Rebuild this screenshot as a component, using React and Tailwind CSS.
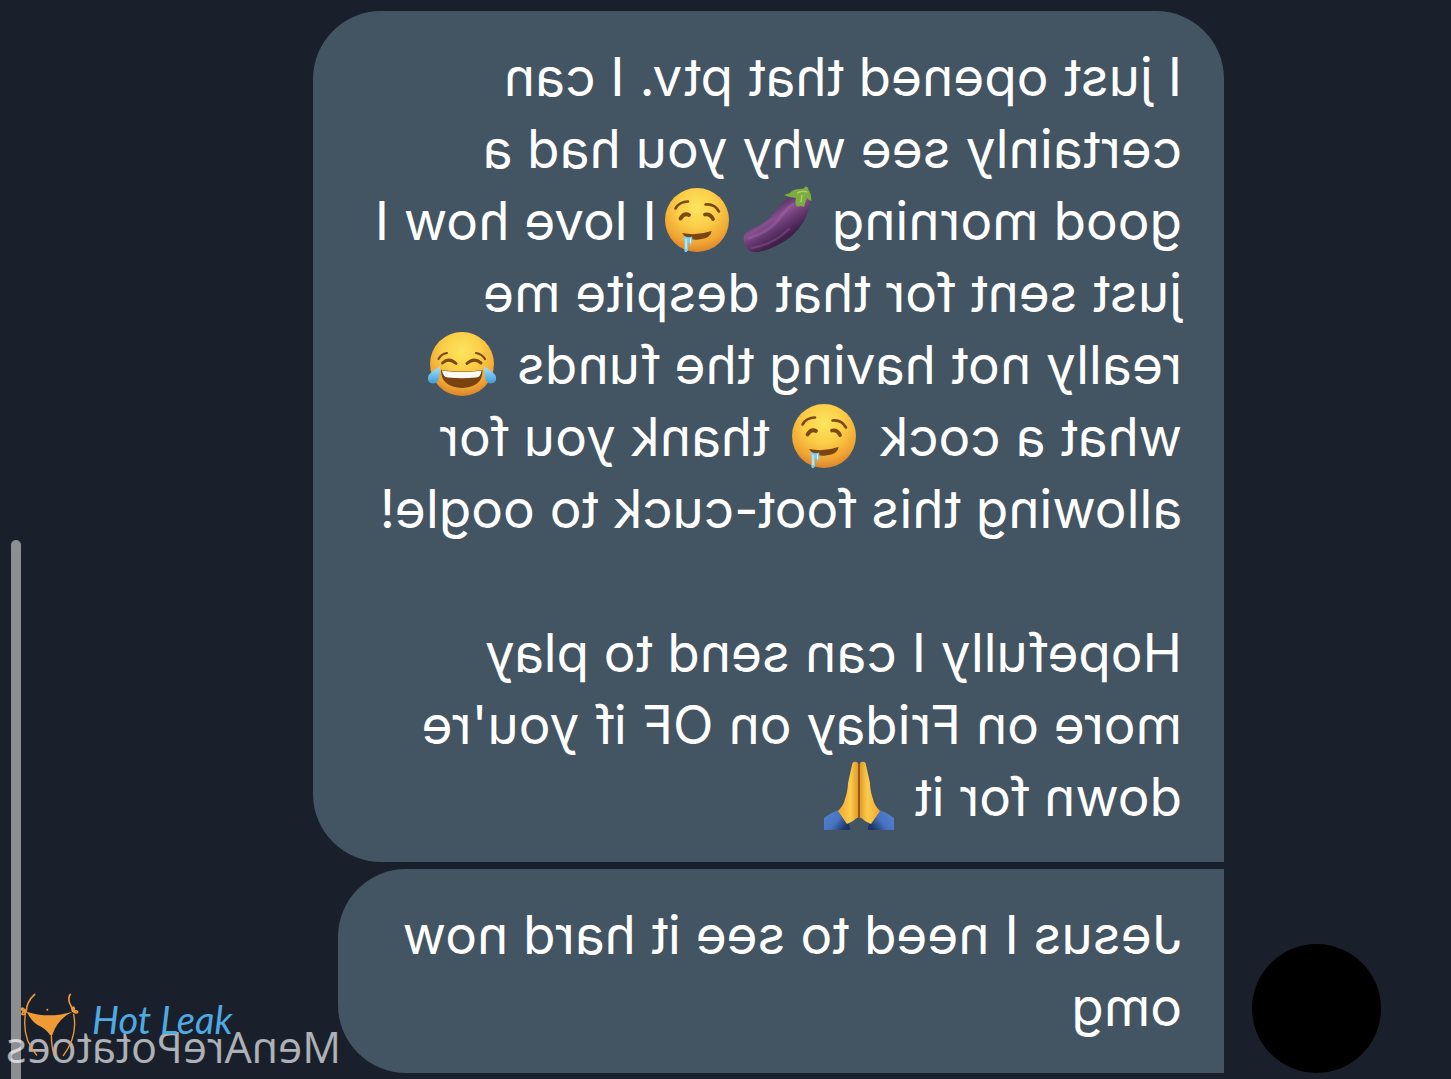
import React from "react";

const emojiClass = "mx-1 inline-block h-[70px] w-[72px] -scale-x-100 align-[-15px]";

function FaceGradient({ id }) {
  return (
    <radialGradient id={id} cx="0.5" cy="0.3" r="0.7">
      <stop offset="0" stopColor="#fde55e" />
      <stop offset="0.45" stopColor="#fbcd47" />
      <stop offset="0.8" stopColor="#f0a634" />
      <stop offset="1" stopColor="#dd842a" />
    </radialGradient>
  );
}

function Drooling({ id }) {
  return (
    <svg className={emojiClass} viewBox="0 0 72 70" role="img" aria-label="drooling face">
      <defs><FaceGradient id={id} /></defs>
      <circle cx="36" cy="35" r="32" fill={`url(#${id})`} />
      <g fill="none" stroke="#7a4a12" strokeLinecap="round">
        <path d="M14.500 23.500Q18.500 16.500 27 16.500" strokeWidth="2.600" />
        <path d="M44.500 19.500Q53.500 18.500 58 26.500" strokeWidth="2.600" />
        <path d="M19.500 33.500Q23 27.500 28 30" strokeWidth="3.800" />
        <path d="M44 29.500Q49.500 28.500 52 34" strokeWidth="3.800" />
      </g>
      <path d="M21 48Q36 51 50.500 46Q50.500 53 38 54.500Q26 56 21 48Z" fill="#7a4512" />
      <path d="M22.500 51Q27 53 31 51.500Q32 54 30.500 60Q29 61.500 28.500 59L28.500 56L27 58L27 65.500Q25 68.500 23.300 66L23.500 58Z" fill="#82cdec" />
      <path d="M25 54L25 64M29.500 53.500L29.500 58" stroke="#e5f8ff" strokeWidth="1" />
    </svg>
  );
}

function Eggplant() {
  return (
    <svg className={emojiClass} viewBox="0 0 72 70" role="img" aria-label="eggplant">
      <defs>
        <linearGradient id="egg" x1="0.3" y1="0.3" x2="0.62" y2="0.75">
          <stop offset="0" stopColor="#56305f" />
          <stop offset="0.35" stopColor="#875090" />
          <stop offset="0.6" stopColor="#693a73" />
          <stop offset="1" stopColor="#40204a" />
        </linearGradient>
      </defs>
      <path d="M3 56Q1 48 11 44Q24 39 33 28Q41 16 50 11Q62 6 68 15Q70 23 63 36Q53 53 35 61Q21 68 12 67Q4 65 3 56Z" fill="url(#egg)" />
      <path d="M8 53Q26 48 37 35Q45 24 52 19" fill="none" stroke="#a66daa" strokeWidth="3" opacity="0.4" strokeLinecap="round" />
      <path d="M11 63Q33 59 48 44" fill="none" stroke="#9a61a0" strokeWidth="2" opacity="0.4" strokeLinecap="round" />
      <path d="M43 10L49 8Q52 4 59 4Q63 4 64.500 1.500Q67.500 1.500 67.500 5Q70 7 70.500 16Q68 16 66 13Q64 18 63 22Q58 20 57 22Q53 20 55 13Q49 13 43 10Z" fill="#7dac40" />
      <path d="M56 8Q62 5 66 7M61 10L60 17" fill="none" stroke="#a9ce62" strokeWidth="1.500" />
    </svg>
  );
}

function Joy() {
  return (
    <svg className={emojiClass} viewBox="0 0 72 70" role="img" aria-label="face with tears of joy">
      <defs>
        <FaceGradient id="joy" />
        <linearGradient id="tear" x1="0" y1="0" x2="0" y2="1">
          <stop offset="0" stopColor="#a9e2fa" />
          <stop offset="1" stopColor="#3f9bdb" />
        </linearGradient>
      </defs>
      <circle cx="36" cy="35" r="32" fill="url(#joy)" />
      <g fill="none" stroke="#7a4a12" strokeLinecap="round">
        <path d="M12.500 30Q15 25 21 24M59 30Q56 25 50 24" strokeWidth="2.200" />
        <path d="M16.500 34Q23 28 30 34.500M41 34.500Q48 28 55 34" strokeWidth="3" />
      </g>
      <path d="M15 41Q36 44 56.500 41Q57 58 36 59Q15 58 15 41Z" fill="#7a4210" />
      <path d="M16 41.500Q36 44.500 55.500 41.500Q55 48 50 48.500Q36 50 22 48.500Q17 48 16 41.500Z" fill="#fbfaf5" />
      <path d="M14 37.500Q14.500 54 7.500 54.500Q1 54 2 48Q3 43.500 14 37.500Z" fill="url(#tear)" />
      <path d="M58 37.500Q57.500 54 64.500 54.500Q71 54 70 48Q69 43.500 58 37.500Z" fill="url(#tear)" />
    </svg>
  );
}

function FoldedHands() {
  const half = (
    <>
      <path d="M16 49Q9 51 1 57L1 69L27 69Q28 65 24 61Z" fill="url(#sleeve)" />
      <path d="M29.500 2Q31 0 34 1L36 4L36 56Q33 57 30 60L24 63L15 50Q21 44 22 38Q25 29 25 22Z" fill="url(#hand)" />
    </>
  );
  return (
    <svg className={emojiClass} viewBox="0 0 72 70" role="img" aria-label="folded hands">
      <defs>
        <linearGradient id="hand" x1="0" y1="0" x2="1" y2="0">
          <stop offset="0" stopColor="#f0a72e" />
          <stop offset="0.6" stopColor="#fdcb4b" />
          <stop offset="1" stopColor="#dd9528" />
        </linearGradient>
        <linearGradient id="sleeve" x1="0" y1="0" x2="1" y2="0.6">
          <stop offset="0" stopColor="#5585d2" />
          <stop offset="0.6" stopColor="#4673bf" />
          <stop offset="1" stopColor="#1e3563" />
        </linearGradient>
      </defs>
      {half}
      <g transform="matrix(-1 0 0 1 72 0)">{half}</g>
      <path d="M36 3L36 56" stroke="#91520f" strokeWidth="1.800" />
    </svg>
  );
}

function BrandMark() {
  return (
    <svg className="h-[68px] w-[60px]" viewBox="60 90 180 204" aria-hidden="true">
      <path d="M80 152Q145 174 218 152Q172 174 157 222L150 222Q138 203 113 192Q95 182 80 152Z" fill="#f09a35" />
      <g fill="none" stroke="#f09a35" strokeWidth="5" strokeLinecap="round">
        <path d="M104 100Q80 122 79 150M211 100Q203 112 209 126Q214 136 218 150" />
        <path d="M76 160Q66 235 110 282M221 160Q234 225 190 284M154 220Q154 255 162 282" strokeWidth="4" />
        <path d="M79 152Q66 136 65 144Q66 150 79 152Q66 150 66 160Q72 164 79 152M218 151Q216 136 221 139Q226 145 218 151Q233 147 233 153Q230 160 218 151" />
      </g>
      <circle cx="142" cy="146" r="3" fill="#f09a35" />
    </svg>
  );
}

export default function App() {
  return (
    <div className="relative min-h-screen overflow-hidden bg-[#19202b] font-['Inter',sans-serif]">
      <main className="flex -scale-x-100 items-end gap-7 pt-[11px] pb-[6px] pl-[70px]">
        <div className="size-[129px] shrink-0 rounded-full bg-black" />
        <div className="flex flex-col items-start gap-[7px] text-[53px] leading-[72px] whitespace-nowrap text-white">
          <p className="rounded-[68px] rounded-bl-none bg-[#435462] pt-[30px] pr-[62px] pb-[29px] pl-[42px]">
            I just opened that ptv. I can<br />
            certainly see why you had a<br />
            good morning <Eggplant /><Drooling id="drool-a" />I love how I<br />
            just sent for that despite me<br />
            really not having the funds <Joy /><br />
            what a cock <Drooling id="drool-b" /> thank you for<br />
            allowing this foot-cuck to oogle!<br />
            <br />
            Hopefully I can send to play<br />
            more on Friday on OF if you're<br />
            down for it <FoldedHands />
          </p>
          <p className="rounded-r-[68px] bg-[#435462] py-[30px] pr-[65px] pl-[42px]">
            Jesus I need to see it hard now<br />
            omg
          </p>
        </div>
      </main>
      <div className="absolute bottom-0 left-[11px] h-1/2 w-[10px] rounded-t-full bg-[#8b8f92]" />
      <div className="absolute bottom-1 left-[6px] -scale-x-100 font-['Open_Sans',sans-serif] text-[43px] leading-[56px] text-white/65">
        MenArePotatoes
      </div>
      <div className="absolute bottom-5 left-5 flex items-start gap-3">
        <BrandMark />
        <span className="font-['Lato',sans-serif] text-[38px] leading-[56px] text-[#4fa9e2] italic">Hot Leak</span>
      </div>
    </div>
  );
}
